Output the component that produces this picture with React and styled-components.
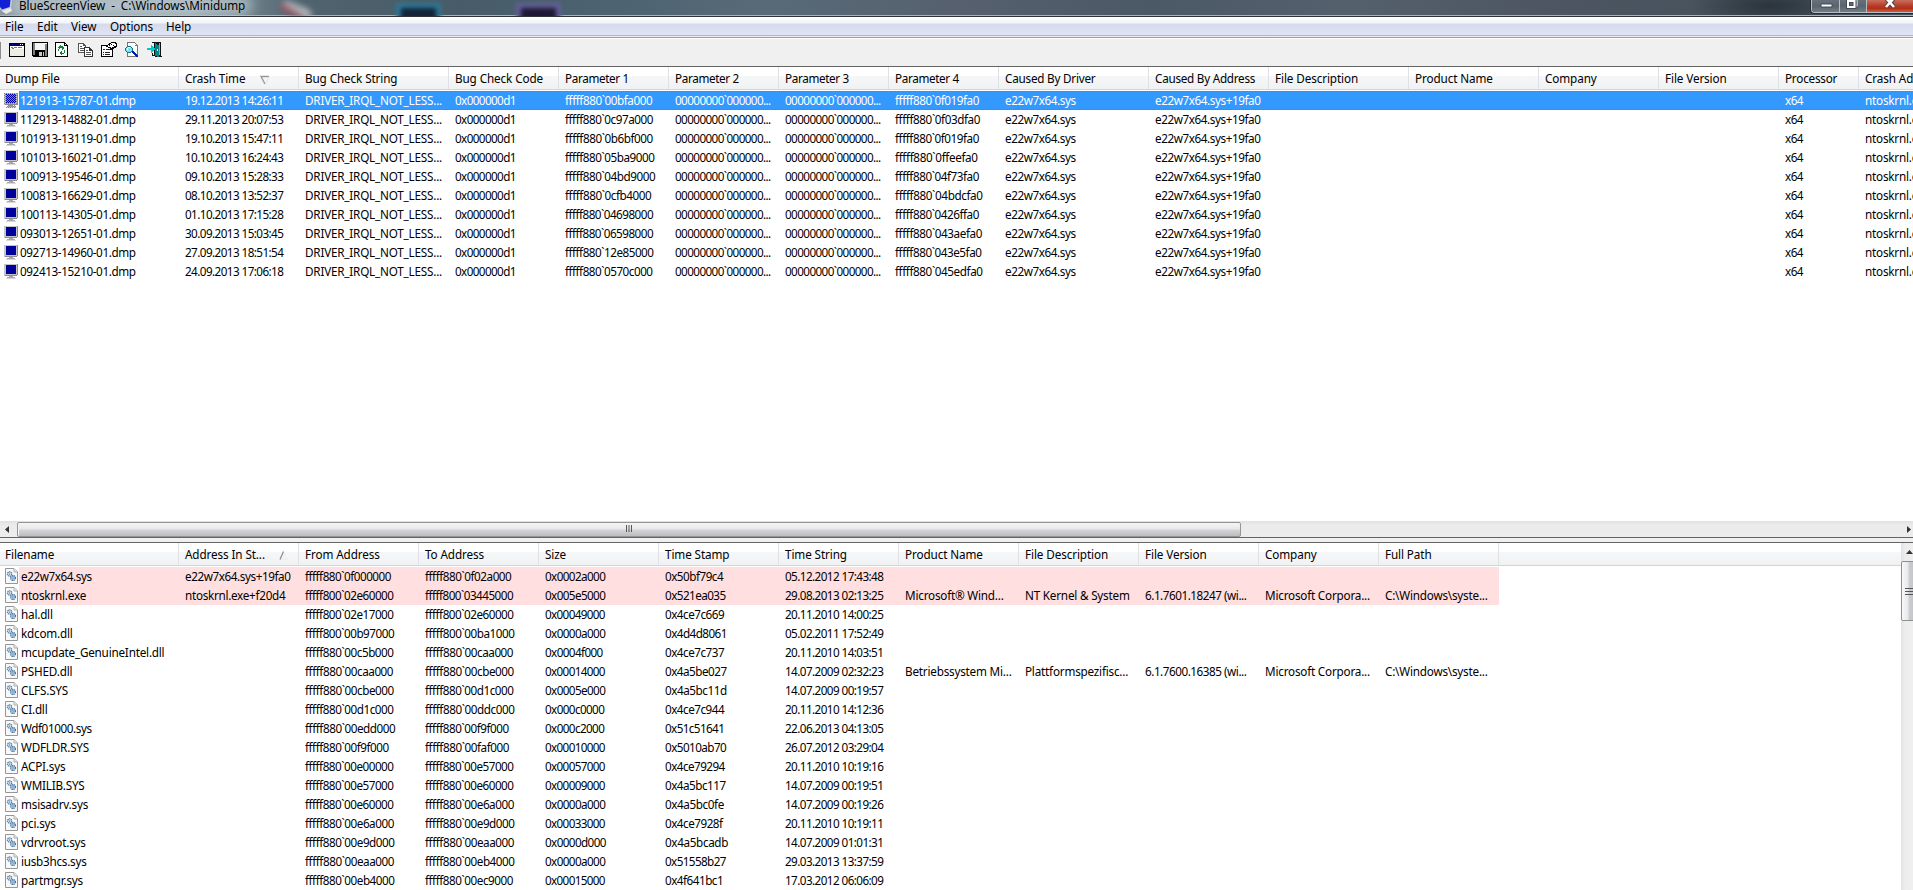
import React from "react";
import styled, { createGlobalStyle, css } from "styled-components";

const Global = createGlobalStyle`
  * { box-sizing: border-box; }
  body { margin: 0; overflow: hidden; background: #fff; }
`;

const Window = styled.div`
  width: 1913px;
  height: 890px;
  overflow: hidden;
  display: flex;
  flex-direction: column;
  background: #f0f0f0;
  color: #000;
  font: 11.7px/19px "Noto Sans", "Open Sans", sans-serif;
  white-space: nowrap;
`;

const TitleBar = styled.header`
  position: relative;
  flex: none;
  height: 17px;
  display: flex;
  align-items: flex-start;
  overflow: hidden;
  border-bottom: 1px solid #2c333a;
  box-shadow: inset 0 -1px 0 #a9b3ba;
  background:
    radial-gradient(ellipse 80px 22px at 1770px 6px, #2b343c 0, transparent 100%),
    linear-gradient(90deg, #8c9aa2 0, #93a2aa 190px, #6d8089 250px, #50636f 300px, #475c68 460px, #4d6371 620px, #586a78 760px, #56606e 960px, #4b5866 1150px, #55606d 1350px, #4c5561 1560px, #48535e 1700px, #424e59 1913px);
`;

const TitleGlow = styled.div`
  position: absolute;
  left: 10px;
  top: -6px;
  width: 242px;
  height: 22px;
  border-radius: 10px;
  background: rgba(205, 218, 224, 0.55);
  filter: blur(6px);
`;

const BackdropIcon = styled.div`
  position: absolute;
  left: ${(p) => p.$x}px;
  top: 3px;
  width: 45px;
  height: 22px;
  border: 5px solid ${(p) => p.$edge};
  background: ${(p) => p.$fill};
  filter: blur(2px);
`;

const BackdropMark = styled.div`
  position: absolute;
  left: 280px;
  top: 5px;
  width: 32px;
  height: 11px;
  border-radius: 6px;
  background: linear-gradient(10deg, #97505c 30%, #b9c3c7 60%);
  transform: rotate(22deg);
  filter: blur(3px);
`;

const TitleIcon = styled.svg`
  position: relative;
  flex: none;
  width: 16px;
  height: 14px;
`;

const TitleText = styled.div`
  position: relative;
  margin: -4px 0 0 3px;
  letter-spacing: -0.06px;
  white-space: pre;
`;

const Captions = styled.div`
  position: relative;
  flex: none;
  display: flex;
  width: 102px;
  height: 13px;
  margin-left: auto;
  border: 1px solid #b7bfc6;
  border-top: 0;
  border-right: 0;
  border-radius: 0 0 0 4px;
  overflow: hidden;
  box-shadow: 0 0 0 1px #252c33;
`;

const Caption = styled.div`
  width: ${(p) => p.$w}px;
  height: 12px;
  border-right: 1px solid #b7bfc6;
  background: ${(p) =>
    p.$close
      ? "linear-gradient(180deg, #c9705f 0, #b9402b 45%, #b32f18 70%, #cf5f3e 100%)"
      : "linear-gradient(180deg, #66717b 0, #59646d 50%, #737d86 100%)"};
  svg { display: block; }
`;

const MenuBar = styled.nav`
  flex: none;
  height: 19px;
  display: flex;
  gap: 14px;
  padding-left: 5px;
  background: linear-gradient(180deg, #fff 0, #f1f4fa 6px, #d5dbed 7px, #dfe5f5 18px);
  border-bottom: 1px solid #b0b4c4;
`;

const MenuItem = styled.span`
  width: ${(p) => p.$w}px;
  letter-spacing: -0.05px;
`;

const ToolBar = styled.div`
  flex: none;
  height: 31px;
  display: flex;
  align-items: flex-start;
  padding: 6px 0 0 1px;
  background: linear-gradient(180deg, #eee 0 1px, #9c9c9c 1px 2px, #fff 2px 3px, #f0f0f0 3px);
  border-bottom: 1px solid #646464;
`;

const Grip = styled.i`
  width: 1px;
  height: 17px;
  margin-left: -1px;
  background: #8c8c8c;
`;

const Tool = styled.svg`
  width: 16px;
  height: 16px;
  flex: none;
  margin-left: ${(p) => p.$gap}px;
  shape-rendering: crispEdges;
`;

const Pane = styled.section`
  flex: none;
  display: flex;
  flex-direction: column;
  height: ${(p) => p.$h}px;
  width: ${(p) => p.$w}px;
  overflow: hidden;
  background: #fff;
`;

const HeaderRow = styled.div`
  flex: none;
  display: flex;
  height: 23px;
  margin-bottom: 1px;
  background: linear-gradient(180deg, #fff 0, #fff 9px, #f5f7f9 9px, #f1f2f4 21px);
  border-bottom: 1px solid #d5d5d5;
`;

const HeaderCell = styled.div`
  flex: none;
  position: relative;
  width: ${(p) => p.$w}px;
  padding: 2px 0 0 ${(p) => (p.$first ? 5 : 6)}px;
  letter-spacing: ${(p) => p.$ls}px;
  border-right: 1px solid #dfe1e4;
  overflow: hidden;
`;

const SortMark = styled.svg`
  position: absolute;
  left: ${(p) => p.$x}px;
  top: 8px;
  width: 10px;
  height: 10px;
`;

const rowTone = {
  selected: css`
    color: #fff;
    background: #3399ff;
    &::before, &::after {
      content: "";
      position: absolute;
      left: 0;
      right: 0;
      height: 1px;
      background: repeating-linear-gradient(90deg, #cc6600 0 1px, #3399ff 1px 2px);
    }
    &::before { top: 0; }
    &::after { bottom: 0; }
  `,
  caused: css`background: #ffdfdf;`,
};

const Row = styled.div`
  flex: none;
  display: flex;
  height: 19px;
`;

const RowBody = styled.div`
  position: relative;
  display: flex;
  ${(p) => rowTone[p.$tone]}
`;

const RowIcon = styled.svg`
  flex: none;
  width: 19px;
  height: 19px;
`;

const Cell = styled.div`
  flex: none;
  width: ${(p) => p.$w}px;
  height: 19px;
  padding-left: ${(p) => p.$pad}px;
  overflow: hidden;
  letter-spacing: ${(p) => p.$ls}px;
`;

const HScroll = styled.div`
  flex: none;
  display: flex;
  align-items: center;
  height: 16px;
  background: linear-gradient(180deg, #e0e0e0 0, #ebebeb 4px, #ededed 16px);
`;

const ScrollArrow = styled.svg`
  flex: none;
  width: ${(p) => p.$w}px;
  height: ${(p) => p.$h}px;
`;

const HThumb = styled.div`
  width: 1224px;
  height: 15px;
  margin-right: auto;
  display: flex;
  align-items: center;
  justify-content: center;
  border: 1px solid #949494;
  border-radius: 2px;
  background: linear-gradient(180deg, #f5f5f5 0, #e8e8ea 6px, #d3d4d6 7px, #bcbdc0 13px);
  box-shadow: inset 1px 0 #f5f5f5;
`;

const Splitter = styled.div`
  flex: none;
  height: 6px;
  border: solid #646464;
  border-width: 1px 0;
  background: #f0f0f0;
`;

const Bottom = styled.div`
  flex: none;
  display: flex;
`;

const VScroll = styled.div`
  width: 12px;
  height: 347px;
  display: flex;
  flex-direction: column;
  overflow: hidden;
  background: linear-gradient(90deg, #e2e2e2 0, #ededed 4px, #efefef 12px);
`;

const VThumb = styled.div`
  width: 15px;
  height: 60px;
  display: flex;
  align-items: center;
  border: 1px solid #8f8f8f;
  border-radius: 2px;
  padding-left: 2px;
  background: linear-gradient(90deg, #f8f8f8 0, #e9e9eb 6px, #cdcdd2 7px, #bebfc5 14px);
`;

const topCols = [
  ["Dump File", 179], ["Crash Time", 120], ["Bug Check String", 150], ["Bug Check Code", 110],
  ["Parameter 1", 110, -0.35], ["Parameter 2", 110, -0.35], ["Parameter 3", 110, -0.35], ["Parameter 4", 110, -0.35],
  ["Caused By Driver", 150, -0.22], ["Caused By Address", 120, -0.25], ["File Description", 140],
  ["Product Name", 130], ["Company", 120], ["File Version", 120], ["Processor", 80, -0.2], ["Crash Address", 120],
];

const dumps = `121913-15787-01|19.12.2013 14:26:11|00bfa000|0f019fa0
112913-14882-01|29.11.2013 20:07:53|0c97a000|0f03dfa0
101913-13119-01|19.10.2013 15:47:11|0b6bf000|0f019fa0
101013-16021-01|10.10.2013 16:24:43|05ba9000|0ffeefa0
100913-19546-01|09.10.2013 15:28:33|04bd9000|04f73fa0
100813-16629-01|08.10.2013 13:52:37|0cfb4000|04bdcfa0
100113-14305-01|01.10.2013 17:15:28|04698000|0426ffa0
093013-12651-01|30.09.2013 15:03:45|06598000|043aefa0
092713-14960-01|27.09.2013 18:51:54|12e85000|043e5fa0
092413-15210-01|24.09.2013 17:06:18|0570c000|045edfa0`
  .split("\n")
  .map((line) => {
    const [file, time, p1, p4] = line.split("|");
    return [
      file + ".dmp", time, "DRIVER_IRQL_NOT_LESS...", "0x000000d1", "fffff880`" + p1,
      "00000000`000000...", "00000000`000000...", "fffff880`" + p4,
      "e22w7x64.sys", "e22w7x64.sys+19fa0", "", "", "", "", "x64", "ntoskrnl.exe",
    ];
  });

const lowCols = [
  ["Filename", 179], ["Address In St...", 120], ["From Address", 120], ["To Address", 120], ["Size", 120],
  ["Time Stamp", 120], ["Time String", 120], ["Product Name", 120], ["File Description", 120],
  ["File Version", 120], ["Company", 120], ["Full Path", 120],
];

const modules = `e22w7x64.sys|e22w7x64.sys+19fa0|fffff880\`0f000000|fffff880\`0f02a000|0x0002a000|0x50bf79c4|05.12.2012 17:43:48
ntoskrnl.exe|ntoskrnl.exe+f20d4|fffff800\`02e60000|fffff800\`03445000|0x005e5000|0x521ea035|29.08.2013 02:13:25|Microsoft® Wind...|NT Kernel & System|6.1.7601.18247 (wi...|Microsoft Corpora...|C:\\Windows\\syste...
hal.dll||fffff800\`02e17000|fffff800\`02e60000|0x00049000|0x4ce7c669|20.11.2010 14:00:25
kdcom.dll||fffff800\`00b97000|fffff800\`00ba1000|0x0000a000|0x4d4d8061|05.02.2011 17:52:49
mcupdate_GenuineIntel.dll||fffff880\`00c5b000|fffff880\`00caa000|0x0004f000|0x4ce7c737|20.11.2010 14:03:51
PSHED.dll||fffff880\`00caa000|fffff880\`00cbe000|0x00014000|0x4a5be027|14.07.2009 02:32:23|Betriebssystem Mi...|Plattformspezifisc...|6.1.7600.16385 (wi...|Microsoft Corpora...|C:\\Windows\\syste...
CLFS.SYS||fffff880\`00cbe000|fffff880\`00d1c000|0x0005e000|0x4a5bc11d|14.07.2009 00:19:57
CI.dll||fffff880\`00d1c000|fffff880\`00ddc000|0x000c0000|0x4ce7c944|20.11.2010 14:12:36
Wdf01000.sys||fffff880\`00edd000|fffff880\`00f9f000|0x000c2000|0x51c51641|22.06.2013 04:13:05
WDFLDR.SYS||fffff880\`00f9f000|fffff880\`00faf000|0x00010000|0x5010ab70|26.07.2012 03:29:04
ACPI.sys||fffff880\`00e00000|fffff880\`00e57000|0x00057000|0x4ce79294|20.11.2010 10:19:16
WMILIB.SYS||fffff880\`00e57000|fffff880\`00e60000|0x00009000|0x4a5bc117|14.07.2009 00:19:51
msisadrv.sys||fffff880\`00e60000|fffff880\`00e6a000|0x0000a000|0x4a5bc0fe|14.07.2009 00:19:26
pci.sys||fffff880\`00e6a000|fffff880\`00e9d000|0x00033000|0x4ce7928f|20.11.2010 10:19:11
vdrvroot.sys||fffff880\`00e9d000|fffff880\`00eaa000|0x0000d000|0x4a5bcadb|14.07.2009 01:01:31
iusb3hcs.sys||fffff880\`00eaa000|fffff880\`00eb4000|0x0000a000|0x51558b27|29.03.2013 13:37:59
partmgr.sys||fffff880\`00eb4000|fffff880\`00ec9000|0x00015000|0x4f641bc1|17.03.2012 06:06:09`
  .split("\n")
  .map((line) => line.split("|"));

// Digits are set tighter than letters; hyphens get a little room back.
function tracking(text) {
  if (!text) return 0;
  const digits = (text.match(/\d/g) || []).length;
  const hyphens = (text.match(/-/g) || []).length;
  return Number((-0.2 - (0.5 * digits - 1.5 * hyphens) / text.length).toFixed(2));
}

function MonitorIcon({ selected }) {
  return (
    <RowIcon shapeRendering="crispEdges" viewBox="0 0 19 19">
      <defs>
        <pattern id="dither" width="2" height="2" patternUnits="userSpaceOnUse">
          <path d="M0 0h1v1H0zM1 1h1v1H1z" fill="#3399ff" />
        </pattern>
      </defs>
      <path d="M4 2h13v12H4z" fill="#c6c6c6" />
      <path d="M17 2h1v12h-1zM5 14h13v-1H5z" fill="#8b8b8b" />
      <path d="M6 3h10v9H6z" fill="#00009c" />
      <path d="M9 14h4v1H9zM7 15h8v1H7z" fill="#a8a8a8" />
      <path d="M6 16h10v1H6z" fill="#d8d8d8" />
      {selected && <path d="M4 2h14v12H4zM7 14h8v1H7zM6 15h10v2H6z" fill="url(#dither)" />}
    </RowIcon>
  );
}

function FileIcon() {
  return (
    <RowIcon viewBox="0 0 19 19">
      <path d="M5.5 1.5h8.5l3.5 3.5v11.500h-12z" fill="#f8f8f8" stroke="#969696" />
      <path d="M14 1.500v3.500h3.500" fill="#e6e6e6" stroke="#b0b0b0" />
      <circle cx="9.600" cy="7" r="2.100" fill="#dcebf6" stroke="#4d7da8" strokeWidth="1.300" strokeDasharray="1.200 .5" />
      <circle cx="9.600" cy="7" r=".6" fill="#1f5182" />
      <circle cx="13" cy="11" r="2.300" fill="#dcebf6" stroke="#386b9b" strokeWidth="1.400" strokeDasharray="1.200 .5" />
      <circle cx="13" cy="11" r=".7" fill="#1f5182" />
    </RowIcon>
  );
}

function Table({ cols, rows, icon, tone, sort, textPad }) {
  return (
    <>
      <HeaderRow>
        {cols.map(([label, w, ls = -0.1], i) => (
          <HeaderCell key={i} $w={w} $ls={ls} $first={i === 0}>
            {label}
            {i === 1 && sort}
          </HeaderCell>
        ))}
      </HeaderRow>
      {rows.map((row, r) => (
        <Row key={r}>
          {icon(r)}
          <RowBody $tone={tone(r)}>
            {cols.map(([, w], i) => (
              <Cell key={i} $w={i ? w : w - 19} $pad={i ? 6 : textPad} $ls={tracking(row[i])}>
                {row[i]}
              </Cell>
            ))}
          </RowBody>
        </Row>
      ))}
    </>
  );
}

export default function App() {
  return (
    <Window>
      <Global />
      <TitleBar>
        <TitleGlow />
        <BackdropMark />
        <BackdropIcon $x={396} $edge="#2e7695" $fill="#14253a" />
        <BackdropIcon $x={516} $edge="#625f97" $fill="#1f1836" />
        <TitleIcon viewBox="0 0 16 14">
          <path d="M0 0h12l-1 9-8 3-3-3z" fill="#c9ced3" />
          <path d="M0 0h10.500l-.8 7L2 9.500 0 7z" fill="#1020d8" />
          <path d="M2 11l9-3 1 3-6 3z" fill="#e8e8e8" />
        </TitleIcon>
        <TitleText>{"BlueScreenView  -  C:\\Windows\\Minidump"}</TitleText>
        <Captions>
          <Caption $w={28}>
            <svg width="27" height="12"><path d="M9 4h11v3H9z" fill="#fff" stroke="#434b53" /></svg>
          </Caption>
          <Caption $w={27}>
            <svg width="26" height="12">
              <path d="M10 0h7v6h-2" fill="none" stroke="#fff" />
              <path d="M8 1h6.500v6H8z" fill="none" stroke="#434b53" strokeWidth="4" />
              <path d="M8 1h6.500v6H8z" fill="none" stroke="#fff" strokeWidth="2" />
            </svg>
          </Caption>
          <Caption $w={47} $close>
            <svg width="46" height="12">
              <path d="M19 -2l8 9M27 -2l-8 9" stroke="#5b3b40" strokeWidth="4.500" />
              <path d="M19 -2l8 9M27 -2l-8 9" stroke="#fff" strokeWidth="2.600" />
            </svg>
          </Caption>
        </Captions>
      </TitleBar>

      <MenuBar>
        <MenuItem $w={18}>File</MenuItem>
        <MenuItem $w={20}>Edit</MenuItem>
        <MenuItem $w={25}>View</MenuItem>
        <MenuItem $w={42}>Options</MenuItem>
        <MenuItem $w={26}>Help</MenuItem>
      </MenuBar>

      <ToolBar>
        <Grip />
        <Tool $gap={8} viewBox="0 0 16 16">
          <path d="M0 1h16v14H0z" fill="#000" />
          <path d="M1 4h14v10H1z" fill="#fff" />
          <path d="M1 2h14v2H1z" fill="#00007b" />
          <path d="M11 2h1v1h-1zM13 2h1v1h-1z" fill="#fff" />
          <path d="M1 7h14v7H1z" fill="#eeeee0" />
          <path d="M2 5h2v1H2zM5 5h3v1H5zM9 5h4v1H9zM3 6h2v1H3z" fill="#7b7b7b" />
        </Tool>
        <Tool $gap={7} viewBox="0 0 16 16">
          <path d="M0 0h16v15H1v-1H0z" fill="#000" />
          <path d="M1 1h2v12H1zM13 2h2v12h-2z" fill="#808080" />
          <path d="M3 1h10v7H3z" fill="#f5f5f5" />
          <path d="M13 1h2v1h-2z" fill="#fff" />
          <path d="M5 10h7v4H5z" fill="#c8c8c8" />
          <path d="M5 10h2v4H5zM10 10h1v4h-1z" fill="#000" />
        </Tool>
        <Tool $gap={7} viewBox="0 0 16 16">
          <path d="M0 0h10v1h1v1h1v1h1v12H0z" fill="#000" />
          <path d="M1 1h8v3h3v10H1z" fill="#fff" />
          <path d="M10 2h1v1h-1z" fill="#fff" />
          <path d="M5 3h1v1h2v1h1v2H8v1H7V6H5v1H4V6H3V5h1V4h1zM3 7h1v2H3zM9 8h1v3H9v1H7v1H6v-1H5v-2h1V9h1v2h2z" fill="#08843a" />
        </Tool>
        <Tool $gap={7} viewBox="0 0 16 16">
          <path d="M0 1h6v1h1v1h1v8H0z" fill="#555" />
          <path d="M1 2h4v2h2v6H1z" fill="#fff" />
          <path d="M2 4h2v1H2zM2 6h4v1H2zM2 8h4v1H2z" fill="#555" />
          <path d="M6 5h6v1h1v1h1v1h1v7H6z" fill="#333" />
          <path d="M7 6h4v3h3v5H7z" fill="#fff" />
          <path d="M8 8h2v1H8zM8 10h5v1H8zM8 12h5v1H8z" fill="#555" />
        </Tool>
        <Tool $gap={7} viewBox="0 0 16 16">
          <path d="M0 3h12v12H0z" fill="#000" />
          <path d="M1 4h10v10H1z" fill="#fff" />
          <path d="M2 7h2v1H2zM5 7h5v1H5zM2 10h1v1H2zM4 10h5v1H4zM2 12h1v1H2zM4 12h5v1H4z" fill="#222" />
          <path d="M6 3h1V2h1V1h2V0h5v1h1v4h-1v1h-2v1h-2v1H9V6H7V5H5V4h1z" fill="#000" />
          <path d="M7 3h2V2h1V1h4v1h1v2h-2v1h-2v1h-1V5H7z" fill="#fff" />
          <path d="M8 3h1v1H8zM10 2h1v1h-1zM12 3h1v1h-1z" fill="#000" />
        </Tool>
        <Tool $gap={8} viewBox="0 0 16 16">
          <path d="M2 0h8v1h1v1h1v1h1v12H2z" fill="#777" />
          <path d="M3 1h7v3h2v10H3z" fill="#fff" />
          <path d="M10 2h1v1h-1z" fill="#fff" />
          <path d="M2 4h4v1h1v1h1v3H7v1H6v1H2v-1H1V9H0V6h1V5h1z" fill="#176b91" />
          <path d="M2 5h4v1h1v3H6v1H2V9H1V6h1z" fill="#7fe2ed" />
          <path d="M3 5h2v1H3zM2 6h1v2H2z" fill="#fff" />
          <path d="M7 9h2v1h1v1h1v1h1v1h1v2h-2v-1h-1v-1H9v-1H8v-1H7z" fill="#0021a8" />
        </Tool>
        <Tool $gap={6} viewBox="0 0 16 16">
          <path d="M5 0h9v14h1v1H8v-1H5v-3h1v2h1V1H5z" fill="#111" />
          <path d="M8 1h1v1h1v1h2v12h-2v-1H8z" fill="#087f87" />
          <path d="M12 1h1v12h-1z" fill="#9ca7aa" />
          <path d="M10 7h1v2h-1z" fill="#fff" />
          <path d="M0 6h4V3h1v1h1v1h1v1h1v2H7v1H6v1H5v1H4V8H0z" fill="#00c8cf" />
        </Tool>
      </ToolBar>

      <Pane $h={454} $w={1913}>
        <Table
          cols={topCols}
          rows={dumps}
          icon={(r) => <MonitorIcon selected={r === 0} />}
          textPad={1}
          tone={(r) => (r === 0 ? "selected" : undefined)}
          sort={
            <SortMark $x={81} viewBox="0 0 10 10">
              <path d="M9 1.500H1l4 7.500" fill="none" stroke="#999" strokeWidth="1.400" />
              <path d="M9.300 1.500L5.500 9" stroke="#e2e2e2" />
            </SortMark>
          }
        />
      </Pane>
      <HScroll>
        <ScrollArrow $w={17} $h={15}><path d="M9 4v7L5 7.500z" fill="#333" /></ScrollArrow>
        <HThumb>
          <svg width="8" height="8"><path d="M1.500 0v7M4 0v7M6.500 0v7" stroke="#555" /></svg>
        </HThumb>
        <ScrollArrow $w={8} $h={15}><path d="M2 4v7l4-3.500z" fill="#333" /></ScrollArrow>
      </HScroll>
      <Splitter />
      <Bottom>
        <Pane $h={347} $w={1901}>
          <Table
            cols={lowCols}
            rows={modules}
            icon={() => <FileIcon />}
            textPad={2}
            tone={(r) => (r < 2 ? "caused" : undefined)}
            sort={
              <SortMark $x={99} viewBox="0 0 10 10">
                <path d="M2 8.500l3.500-8" stroke="#888" strokeWidth="1.200" />
                <path d="M6 2l2.500 6.500H4" fill="none" stroke="#ededed" />
              </SortMark>
            }
          />
        </Pane>
        <VScroll>
          <ScrollArrow $w={16} $h={18}><path d="M5 11h7L8.500 7z" fill="#333" /></ScrollArrow>
          <VThumb>
            <svg width="9" height="9"><path d="M1 1.500h8M1 4.500h8M1 7.500h8" stroke="#555" /></svg>
          </VThumb>
        </VScroll>
      </Bottom>
    </Window>
  );
}
